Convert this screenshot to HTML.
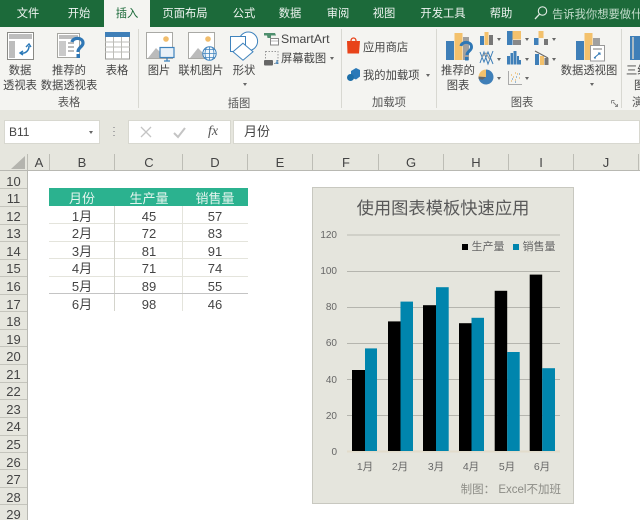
<!DOCTYPE html>
<html lang="zh"><head><meta charset="utf-8"><style>
html,body{margin:0;padding:0}
body{width:640px;height:520px;overflow:hidden;position:relative;background:#fff;font-family:"Liberation Sans","Noto Sans CJK SC",sans-serif;}
.a{position:absolute;white-space:nowrap}
.t{position:absolute;white-space:nowrap;transform:translateX(-50%);text-align:center}
.tab{top:5px;font-size:11.3px;line-height:18px;color:#fff;opacity:.93}
.rb{font-size:11.3px;line-height:15px;color:#444}
.gl{font-size:11.3px;line-height:14px;color:#555}
.ch{top:153px;font-size:13px;line-height:19px;color:#444}
.rh{left:0;width:27px;text-align:center;font-size:13px;line-height:17px;color:#444;position:absolute}
.cs{position:absolute;top:154px;width:1px;height:16px;background:#bdbdb5}
.rs{position:absolute;left:0;width:27px;height:1px;background:#c4c4bc}
.cell{position:absolute;font-size:13px;line-height:17px;color:#444;transform:translateX(-50%);white-space:nowrap}
.sep{position:absolute;top:29px;width:1px;height:79px;background:#d8d8d2}
.ar{position:absolute;width:0;height:0;border:2.5px solid transparent;border-top:3px solid #666}
</style></head><body>
<div class="a" style="left:0;top:0;width:640px;height:27px;background:#1c6a3a"></div>
<div class="a" style="left:104px;top:0;width:46px;height:28px;background:#f4f4f1"></div>
<div class="t tab" style="left:28px">文件</div>
<div class="t tab" style="left:79px">开始</div>
<div class="t tab" style="left:127px;color:#1c6a3a;opacity:1">插入</div>
<div class="t tab" style="left:185px">页面布局</div>
<div class="t tab" style="left:244px">公式</div>
<div class="t tab" style="left:290px">数据</div>
<div class="t tab" style="left:338px">审阅</div>
<div class="t tab" style="left:384px">视图</div>
<div class="t tab" style="left:443px">开发工具</div>
<div class="t tab" style="left:501px">帮助</div>
<svg class="a" style="left:533px;top:5px" width="16" height="17" viewBox="0 0 16 17"><circle cx="9.5" cy="6" r="4.2" fill="none" stroke="#dfe9e2" stroke-width="1.1"/><path d="M6.5 9.2 2 14" stroke="#dfe9e2" stroke-width="1.3"/></svg>
<div class="a" style="left:552px;top:6px;font-size:11.3px;line-height:18px;color:#c3dccb">告诉我你想要做什么</div>

<div class="a" style="left:0;top:27px;width:640px;height:83px;background:#f4f4f1"></div>
<div class="a" style="left:0;top:110px;width:640px;height:60px;background:#e6e6de"></div>
<div class="sep" style="left:138px"></div><div class="sep" style="left:341px"></div><div class="sep" style="left:436px"></div><div class="sep" style="left:621px"></div>

<svg class="a" style="left:0;top:27px" width="140" height="36" viewBox="0 0 140 36">
<rect x="7.5" y="5.5" width="26" height="27" fill="#fff" stroke="#8a8a86"/>
<rect x="9" y="7" width="23" height="5" fill="#bdbdbd"/><rect x="9" y="14" width="6" height="17" fill="#bdbdbd"/>
<path d="M21 26c4 1 8-2 8-7" fill="none" stroke="#2b79b8" stroke-width="1.5"/><path d="M26 20l3-3 2 3M23 24l-3 2 3 2" fill="none" stroke="#2b79b8" stroke-width="1.4"/>
<rect x="57.5" y="6.5" width="22" height="24" fill="#fff" stroke="#a5a5a0"/>
<rect x="59" y="8" width="19" height="4" fill="#bdbdbd"/><rect x="59" y="14" width="7" height="15" fill="#c9c9c9"/><path d="M68 16h6M68 20h6M68 24h6" stroke="#bbb" stroke-width="2"/>
<path d="M72 15c1-5 11-5 11 1 0 4-5 4-5 9" fill="none" stroke="#2f77b5" stroke-width="3.2"/><rect x="76.5" y="27" width="3.5" height="4" fill="#2f77b5"/>
<rect x="105.5" y="6.5" width="24" height="25.5" fill="#fff" stroke="#9a9a96"/><rect x="105" y="5" width="25" height="5" fill="#3f7fb8"/>
<path d="M105 15h25M105 20h25M105 25h25M113.5 10v22M121.5 10v22" stroke="#bdbdb8"/>
</svg>
<div class="t rb" style="left:20px;top:64px">数据<br>透视表</div>
<div class="t rb" style="left:69px;top:64px">推荐的<br>数据透视表</div>
<div class="t rb" style="left:117px;top:64px">表格</div>
<div class="t gl" style="left:69px;top:96px">表格</div>

<svg class="a" style="left:140px;top:27px" width="205" height="42" viewBox="140 27 205 42">
<rect x="146.5" y="32.5" width="26" height="26" fill="#fff" stroke="#a9a9a5"/><path d="M148 58l8-10 5 5 4-3 7 8z" fill="#bbb"/><circle cx="166" cy="39" r="2.8" fill="#f1bd6c"/>
<rect x="160" y="47.5" width="14" height="10" fill="#e9f1f8" stroke="#3f83bd" stroke-width="1.2"/><path d="M167 58v2.500M164 61h6" stroke="#3f83bd" stroke-width="1.3"/>
<rect x="188.5" y="32.5" width="26" height="26" fill="#fff" stroke="#a9a9a5"/><path d="M190 58l8-10 5 5 4-3 7 8z" fill="#bbb"/><circle cx="208" cy="39" r="2.8" fill="#f1bd6c"/>
<circle cx="209.500" cy="53.500" r="6.700" fill="#f2f7fb" stroke="#3f83bd"/><path d="M203 53.500h13M204.500 49.500h10M204.500 57.500h10M209.500 47v13M206.500 47.500c-2 4-2 8 0 12M212.500 47.500c2 4 2 8 0 12" fill="none" stroke="#3f83bd" stroke-width=".8"/>
<circle cx="248.300" cy="41.300" r="9.300" fill="#fff" stroke="#3f83bd"/><rect x="230.500" y="36.500" width="15" height="15" fill="#fff" stroke="#3f83bd"/><path d="M243 43.200l10 8.500-10 8.500-10-8.500z" fill="#fff" stroke="#3f83bd"/>
<path d="M264 33h11l1 2.500h-5v2.500h-3.500l-.5-2.500h-3z" fill="#4f8f6e"/><rect x="270.500" y="38.500" width="8" height="6.500" fill="#fff" stroke="#888"/><path d="M271 41h7" stroke="#bbb"/>
<rect x="265.500" y="51.500" width="12.500" height="12" fill="none" stroke="#999" stroke-dasharray="1.5 1.5"/><rect x="264" y="60" width="9" height="5.500" rx="1" fill="#666"/><path d="M277 60v4M275.500 63h3" stroke="#2f77b5"/>
</svg>
<div class="a" style="left:281px;top:31px;font-size:12.300px;line-height:16px;color:#444">SmartArt</div>
<div class="a" style="left:281px;top:52px;font-size:11.300px;line-height:15px;color:#444">屏幕截图</div>
<div class="ar" style="left:329.500px;top:57px"></div>
<div class="t rb" style="left:159px;top:64px">图片</div>
<div class="t rb" style="left:201px;top:64px">联机图片</div>
<div class="t rb" style="left:244px;top:64px">形状</div>
<div class="ar" style="left:243px;top:83px"></div>
<div class="t gl" style="left:239px;top:97px">插图</div>

<svg class="a" style="left:345px;top:36px" width="18" height="50" viewBox="345 36 18 50">
<path d="M347 41h13l-1 12.500h-11.500z" fill="#e8431a"/><path d="M351 41c0-4 5-4 5 0" fill="none" stroke="#e8431a" stroke-width="1.3"/>
<path d="M351 71l5-3 4 2v6.500l-4 3-5-2z" fill="#2b79b8"/><circle cx="350.500" cy="77.500" r="3.500" fill="#1e6fa8"/>
</svg>
<div class="a" style="left:363px;top:40px;font-size:11.300px;line-height:16px;color:#444">应用商店</div>
<div class="a" style="left:363px;top:68px;font-size:11.300px;line-height:16px;color:#444">我的加载项</div>
<div class="ar" style="left:426px;top:74px"></div>
<div class="t gl" style="left:389px;top:96px">加载项</div>

<svg class="a" style="left:440px;top:28px" width="200" height="62" viewBox="440 28 200 62">
<rect x="446" y="41" width="8" height="19" fill="#3f7fb8"/><rect x="454.500" y="33" width="8" height="27" fill="#f3c16c"/><rect x="463" y="37" width="6" height="23" fill="#a0a0a0"/>
<path d="M461 46c1-5 10.500-5 10.500 1 0 4-4.500 4-4.500 8" fill="none" stroke="#2f77b5" stroke-width="3"/><rect x="465" y="57" width="3.500" height="3.500" fill="#2f77b5"/>
<rect x="480" y="36" width="4" height="9" fill="#3f7fb8"/><rect x="484.500" y="32" width="4" height="13" fill="#f3c16c"/><rect x="489" y="35" width="4" height="10" fill="#777"/>
<rect x="507" y="31" width="5.500" height="14" fill="#3f7fb8"/><rect x="512.500" y="31" width="8.500" height="8.500" fill="#f3c16c"/><rect x="513" y="40" width="8" height="5" fill="#888"/>
<rect x="534" y="38" width="4.500" height="7" fill="#3f7fb8"/><rect x="538.500" y="34" width="4.500" height="4" fill="#3f7fb8"/><rect x="538.500" y="31" width="5" height="7" fill="#f3c16c"/><rect x="544" y="39" width="4" height="6" fill="#777"/>
<path d="M480 63l4-11 4 12 5-13M480 52l4 10 4-10 5 12" fill="none" stroke="#3f7fb8"/><path d="M482 57l4-4 4 7" fill="none" stroke="#999"/>
<rect x="507" y="56" width="3" height="8.500" fill="#3f7fb8"/><rect x="510.500" y="53" width="2.500" height="11.500" fill="#3f7fb8"/><rect x="513.500" y="51" width="3" height="13.500" fill="#3f7fb8"/><rect x="517" y="56" width="2" height="8.500" fill="#3f7fb8"/><rect x="519" y="60" width="2" height="4.500" fill="#3f7fb8"/>
<rect x="535" y="54" width="4" height="11" fill="#3f7fb8"/><rect x="540" y="56" width="4" height="9" fill="#f3c16c"/><rect x="544.500" y="58" width="4" height="7" fill="#777"/><path d="M535 51l13 7" stroke="#666"/>
<path d="M486 77v-7.500a7.500 7.500 0 1 1-7.300 9.300z" fill="#3f7fb8"/><path d="M486 77l-7.400-.6a7.500 7.500 0 0 1 7.400-6.900z" fill="#f3c16c"/><path d="M486 77l-7.500-.5v2.300l4 1z" fill="#666"/>
<path d="M508.500 71v13.500H522" fill="none" stroke="#aaa"/><path d="M511 81h1M513 77h1M515 80h1M517 74h1M519 78h1M511 75h1M515 73h1" stroke="#e8a33c"/><path d="M512 79h1M516 77h1M519 74h1M515 82h1" stroke="#3f7fb8"/>
<rect x="576" y="41" width="8" height="19" fill="#3f7fb8"/><rect x="584.500" y="33" width="8" height="27" fill="#f3c16c"/><rect x="593" y="38" width="7" height="22" fill="#a0a0a0"/>
<rect x="590.500" y="45.500" width="14" height="15.500" fill="#fff" stroke="#999"/><path d="M593 49h9" stroke="#bbb" stroke-width="2"/><path d="M594 58l6-5M598 53h2v2M594 58h2" stroke="#2f77b5" fill="none"/>
<rect x="630" y="36" width="10" height="24" fill="#3f7fb8"/><path d="M633 37v22" stroke="#cfcfc8" stroke-width="1.5"/>
</svg>
<div class="ar" style="left:496.500px;top:38px"></div><div class="ar" style="left:524.500px;top:38px"></div><div class="ar" style="left:551.500px;top:38px"></div>
<div class="ar" style="left:496.500px;top:58px"></div><div class="ar" style="left:524.500px;top:58px"></div><div class="ar" style="left:551.500px;top:58px"></div>
<div class="ar" style="left:496.500px;top:77px"></div><div class="ar" style="left:524.500px;top:77px"></div>
<div class="ar" style="left:589.500px;top:83px"></div>
<div class="t rb" style="left:458px;top:64px">推荐的<br>图表</div>
<div class="t rb" style="left:589px;top:64px">数据透视图</div>
<div class="a rb" style="left:626px;top:64px">三维地</div>
<div class="a rb" style="left:634px;top:79px">图</div>
<div class="t gl" style="left:522px;top:96px">图表</div>
<div class="a gl" style="left:632px;top:96px">演示</div>
<svg class="a" style="left:611px;top:100px" width="8" height="8"><path d="M.5.5h3M.5.5v3M2 2l4.500 4.500M6.500 4v2.500H4" fill="none" stroke="#888"/></svg>

<div class="a" style="left:4px;top:120px;width:96px;height:24px;background:#fff;border:1px solid #d8d8d0;box-sizing:border-box"></div>
<div class="a" style="left:9px;top:124px;font-size:12px;line-height:16px;color:#444">B11</div>
<div class="ar" style="left:89px;top:131px"></div>
<div class="a" style="left:113px;top:127px;width:2px;height:10px;background-image:repeating-linear-gradient(#aaa 0 1px,transparent 1px 4px)"></div>
<div class="a" style="left:128px;top:120px;width:103px;height:24px;background:#fff;border:1px solid #d8d8d0;box-sizing:border-box"></div>
<svg class="a" style="left:139px;top:125px" width="90" height="15" viewBox="0 0 90 15"><path d="M2 2l10 10M12 2 2 12" stroke="#c4c4c4" stroke-width="1.3"/><path d="M35 8l4 4 7-9" fill="none" stroke="#c4c4c4" stroke-width="2"/></svg>
<div class="a" style="left:208px;top:123px;font:italic 14px/18px 'Liberation Serif',serif;color:#555">fx</div>
<div class="a" style="left:233px;top:120px;width:407px;height:24px;background:#fff;border:1px solid #d8d8d0;box-sizing:border-box"></div>
<div class="a" style="left:244px;top:123px;font-size:13px;line-height:18px;color:#444">月份</div>

<svg class="a" style="left:8px;top:155px" width="18" height="15"><path d="M17 1v13H3z" fill="#b4b4ae"/></svg>
<div class="a" style="left:0;top:170px;width:640px;height:1px;background:#b8b8b2"></div>
<div class="a" style="left:27px;top:170px;width:1px;height:350px;background:#b8b8b2"></div>
<div class="a" style="left:0;top:171px;width:27px;height:349px;background:#e6e6de"></div>
<div class="cs" style="left:27px"></div><div class="cs" style="left:49px"></div><div class="cs" style="left:114px"></div><div class="cs" style="left:182px"></div><div class="cs" style="left:247px"></div><div class="cs" style="left:312px"></div><div class="cs" style="left:378px"></div><div class="cs" style="left:443px"></div><div class="cs" style="left:508px"></div><div class="cs" style="left:573px"></div><div class="cs" style="left:638px"></div>
<div class="t ch" style="left:39px">A</div><div class="t ch" style="left:82px">B</div><div class="t ch" style="left:149px">C</div><div class="t ch" style="left:215px">D</div><div class="t ch" style="left:280px">E</div><div class="t ch" style="left:346px">F</div><div class="t ch" style="left:411px">G</div><div class="t ch" style="left:476px">H</div><div class="t ch" style="left:541px">I</div><div class="t ch" style="left:606px">J</div>

<div class="rh" style="top:173px">10</div><div class="rs" style="top:188px"></div>
<div class="rh" style="top:190px">11</div><div class="rs" style="top:206px"></div>
<div class="rh" style="top:208px">12</div><div class="rs" style="top:224px"></div>
<div class="rh" style="top:225px">13</div><div class="rs" style="top:241px"></div>
<div class="rh" style="top:243px">14</div><div class="rs" style="top:259px"></div>
<div class="rh" style="top:260px">15</div><div class="rs" style="top:276px"></div>
<div class="rh" style="top:278px">16</div><div class="rs" style="top:294px"></div>
<div class="rh" style="top:296px">17</div><div class="rs" style="top:311px"></div>
<div class="rh" style="top:313px">18</div><div class="rs" style="top:329px"></div>
<div class="rh" style="top:331px">19</div><div class="rs" style="top:346px"></div>
<div class="rh" style="top:348px">20</div><div class="rs" style="top:364px"></div>
<div class="rh" style="top:366px">21</div><div class="rs" style="top:382px"></div>
<div class="rh" style="top:383px">22</div><div class="rs" style="top:399px"></div>
<div class="rh" style="top:401px">23</div><div class="rs" style="top:417px"></div>
<div class="rh" style="top:418px">24</div><div class="rs" style="top:435px"></div>
<div class="rh" style="top:436px">25</div><div class="rs" style="top:452px"></div>
<div class="rh" style="top:454px">26</div><div class="rs" style="top:469px"></div>
<div class="rh" style="top:471px">27</div><div class="rs" style="top:487px"></div>
<div class="rh" style="top:489px">28</div><div class="rs" style="top:504px"></div>
<div class="rh" style="top:506px">29</div>

<div class="a" style="left:49px;top:188px;width:199px;height:18px;background:#2bb28f"></div>
<div class="cell" style="left:82px;top:190px;color:#e4f4ee">月份</div><div class="cell" style="left:149px;top:190px;color:#e4f4ee">生产量</div><div class="cell" style="left:215px;top:190px;color:#e4f4ee">销售量</div>
<div class="a" style="left:49px;top:206px;width:199px;height:105px;background-image:linear-gradient(#e4e4dc,#e4e4dc),linear-gradient(#e4e4dc,#e4e4dc),linear-gradient(#e4e4dc,#e4e4dc),linear-gradient(#e4e4dc,#e4e4dc);background-size:100% 1px;background-repeat:no-repeat;background-position:0 17px,0 35px,0 52px,0 70px"></div>
<div class="a" style="left:114px;top:206px;width:1px;height:105px;background:#d4d4cc"></div>
<div class="a" style="left:182px;top:206px;width:1px;height:105px;background:#e4e4dc"></div>
<div class="a" style="left:49px;top:293px;width:199px;height:1px;background:#c4c4c4"></div>
<div class="cell" style="left:82px;top:208px">1月</div><div class="cell" style="left:149px;top:208px">45</div><div class="cell" style="left:215px;top:208px">57</div>
<div class="cell" style="left:82px;top:225px">2月</div><div class="cell" style="left:149px;top:225px">72</div><div class="cell" style="left:215px;top:225px">83</div>
<div class="cell" style="left:82px;top:243px">3月</div><div class="cell" style="left:149px;top:243px">81</div><div class="cell" style="left:215px;top:243px">91</div>
<div class="cell" style="left:82px;top:260px">4月</div><div class="cell" style="left:149px;top:260px">71</div><div class="cell" style="left:215px;top:260px">74</div>
<div class="cell" style="left:82px;top:278px">5月</div><div class="cell" style="left:149px;top:278px">89</div><div class="cell" style="left:215px;top:278px">55</div>
<div class="cell" style="left:82px;top:296px">6月</div><div class="cell" style="left:149px;top:296px">98</div><div class="cell" style="left:215px;top:296px">46</div>

<svg class="a" style="left:312px;top:187px" width="263" height="318" viewBox="312 187 263 318" font-family="'Liberation Sans','Noto Sans CJK SC',sans-serif">
<rect x="312.5" y="187.5" width="261" height="316" fill="#e5e5dd" stroke="#c8c8c0"/>
<text x="443" y="214" font-size="17.3" fill="#595959" text-anchor="middle">使用图表模板快速应用</text>
<path d="M347 235h213" stroke="#c9c9c2" stroke-width="1.5"/>
<path d="M347 271.5h213M347 307.5h213M347 343.5h213M347 379.5h213M347 415.5h213" stroke="#b5b5ae"/>
<path d="M347 451.5h213" stroke="#e2dccb" stroke-width="2"/>
<g font-size="10" fill="#666" text-anchor="end">
<text x="337" y="238">120</text><text x="337" y="274">100</text><text x="337" y="310">80</text><text x="337" y="346">60</text><text x="337" y="383">40</text><text x="337" y="419">20</text><text x="337" y="455">0</text></g>
<rect x="462" y="244" width="6" height="6" fill="#000"/><text x="471.5" y="250" font-size="11" fill="#666">生产量</text>
<rect x="513" y="244" width="6" height="6" fill="#0085ad"/><text x="522.5" y="250" font-size="11" fill="#666">销售量</text>
<g fill="#000"><rect x="352" y="370" width="13" height="81"/><rect x="388" y="321.4" width="12.500" height="129.6"/><rect x="423" y="305.2" width="13" height="145.8"/><rect x="459" y="323.2" width="12.500" height="127.8"/><rect x="494.700" y="290.8" width="12.500" height="160.2"/><rect x="529.700" y="274.6" width="12.500" height="176.4"/></g>
<g fill="#0085ad"><rect x="365" y="348.4" width="12" height="102.6"/><rect x="400.500" y="301.6" width="12.500" height="149.4"/><rect x="436" y="287.2" width="12.700" height="163.8"/><rect x="471.500" y="317.8" width="12.500" height="133.2"/><rect x="507.200" y="352" width="12.500" height="99"/><rect x="542.200" y="368.2" width="12.800" height="82.8"/></g>
<g font-size="10.500" fill="#666" text-anchor="middle"><text x="365" y="470">1月</text><text x="400" y="470">2月</text><text x="436" y="470">3月</text><text x="471" y="470">4月</text><text x="507" y="470">5月</text><text x="542" y="470">6月</text></g>
<text x="561" y="493" font-size="11.5" fill="#8c8c86" text-anchor="end">制图： Excel不加班</text>
</svg>
</body></html>
